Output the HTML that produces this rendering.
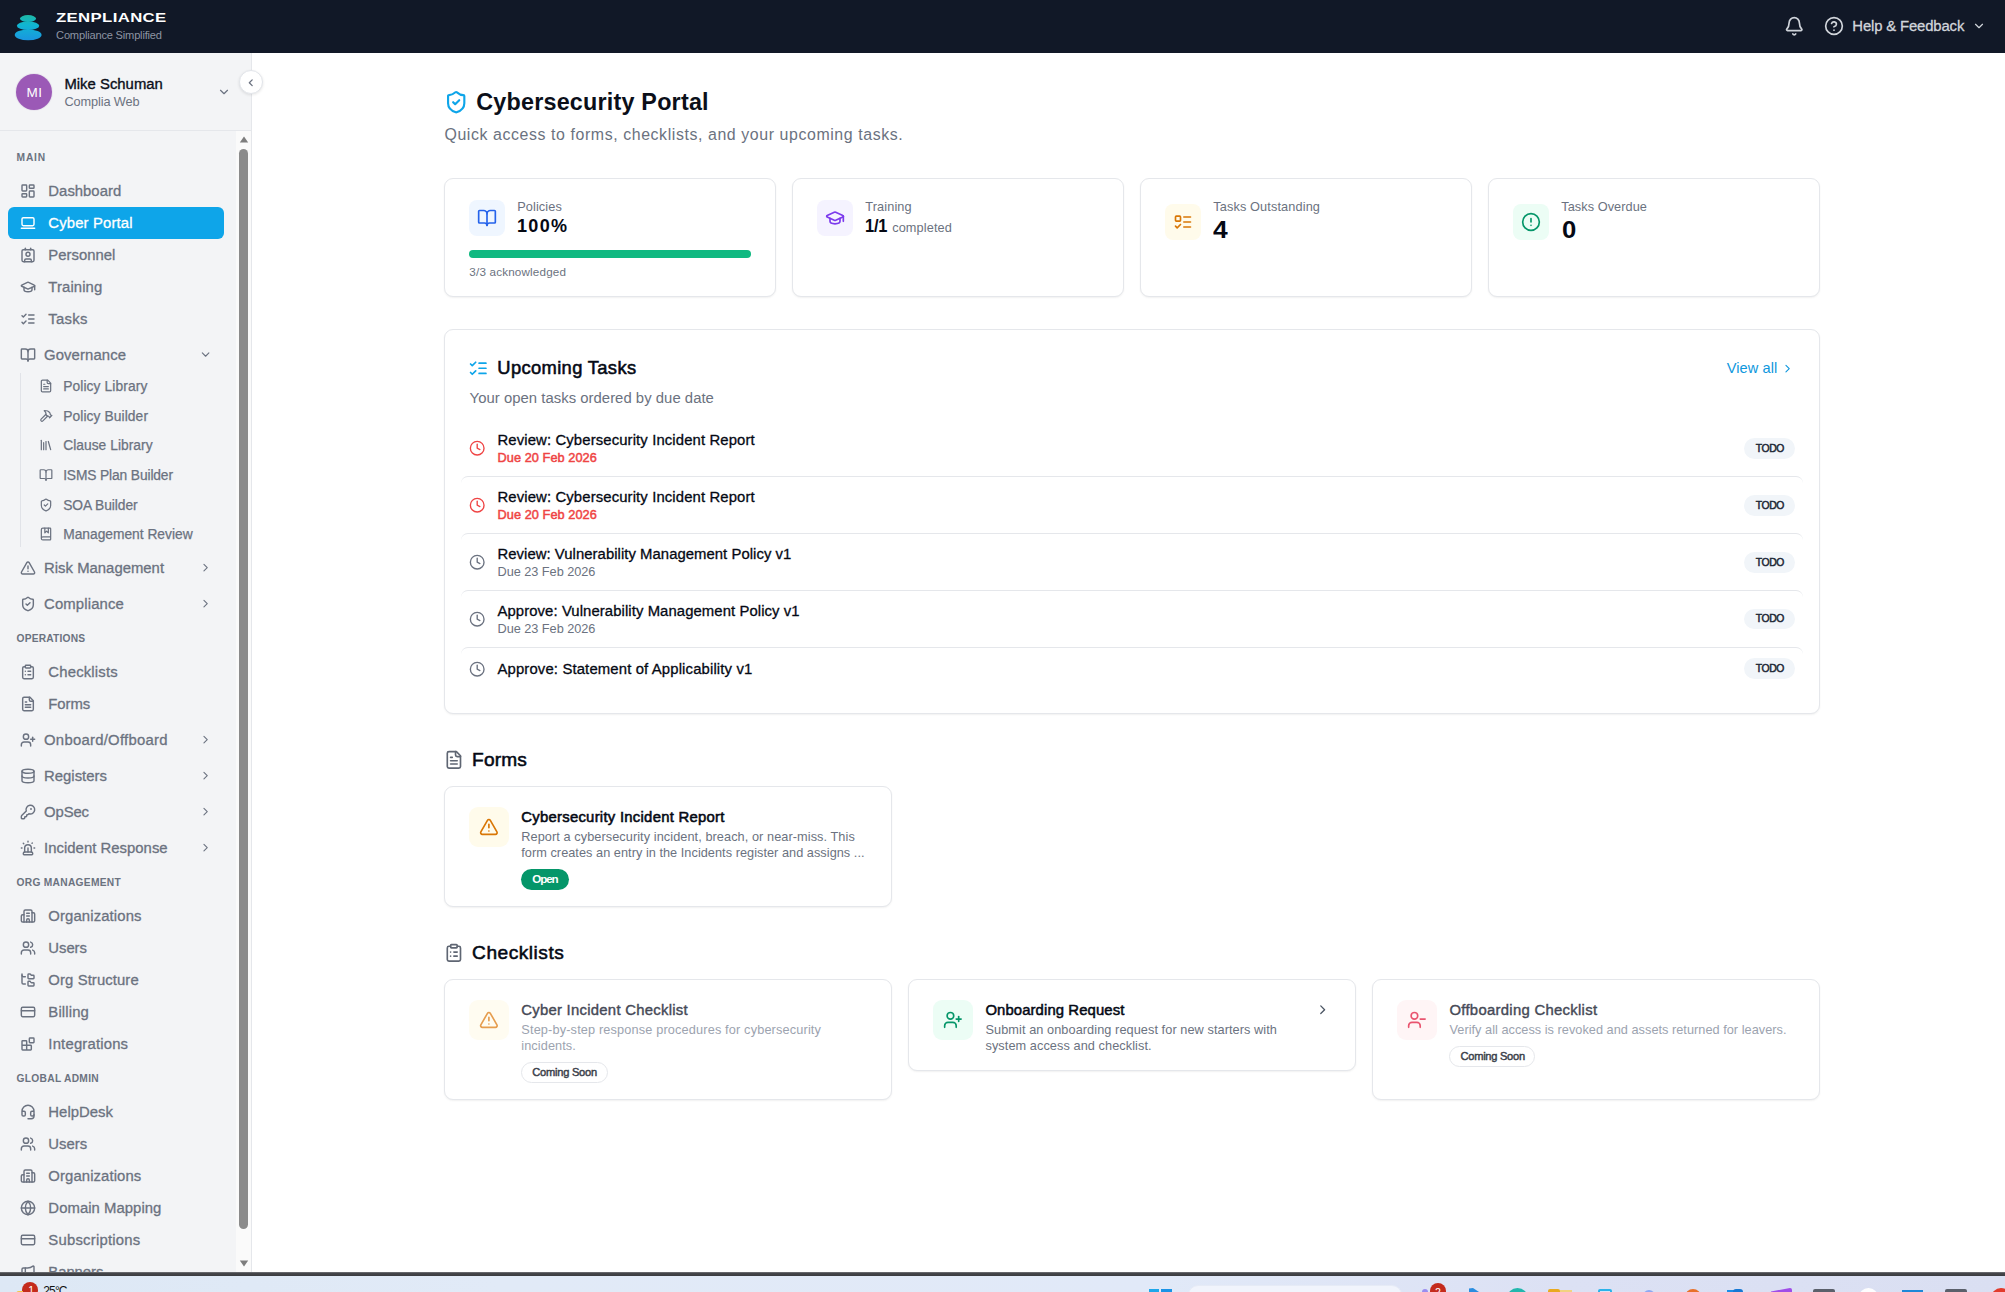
<!DOCTYPE html>
<html><head><meta charset="utf-8"><title>Cybersecurity Portal</title>
<style>
html,body{margin:0;padding:0}
body{width:2005px;height:1292px;overflow:hidden;position:relative;background:#fff;font-family:"Liberation Sans",sans-serif;-webkit-font-smoothing:antialiased}
#r>div,#r>span,#r>svg{position:absolute;display:block;box-sizing:border-box}
#r>span{white-space:pre}
#r{position:absolute;left:0;top:0;width:2005px;height:1292px;overflow:hidden}

</style></head><body>
<svg width="0" height="0" style="position:absolute"><defs><g id="i-alertcircle"><circle cx="12" cy="12" r="10"/><line x1="12" x2="12" y1="8" y2="12"/><line x1="12" x2="12.01" y1="16" y2="16"/></g><g id="i-bell"><path d="M10.268 21a2 2 0 0 0 3.464 0"/><path d="M3.262 15.326A1 1 0 0 0 4 17h16a1 1 0 0 0 .74-1.673C19.41 13.956 18 12.499 18 8A6 6 0 0 0 6 8c0 4.499-1.411 5.956-2.738 7.326"/></g><g id="i-blocks"><rect width="7" height="7" x="14" y="3" rx="1"/><path d="M10 21V8a1 1 0 0 0-1-1H4a1 1 0 0 0-1 1v12a1 1 0 0 0 1 1h12a1 1 0 0 0 1-1v-5a1 1 0 0 0-1-1H3"/></g><g id="i-bookmarked"><path d="M10 2v8l3-3 3 3V2"/><path d="M4 19.5v-15A2.5 2.5 0 0 1 6.5 2H19a1 1 0 0 1 1 1v18a1 1 0 0 1-1 1H6.5a1 1 0 0 1 0-5H20"/></g><g id="i-bookopen"><path d="M12 7v14"/><path d="M3 18a1 1 0 0 1-1-1V4a1 1 0 0 1 1-1h5a4 4 0 0 1 4 4 4 4 0 0 1 4-4h5a1 1 0 0 1 1 1v13a1 1 0 0 1-1 1h-6a3 3 0 0 0-3 3 3 3 0 0 0-3-3z"/></g><g id="i-building"><path d="M10 12h4"/><path d="M10 8h4"/><path d="M14 21v-3a2 2 0 0 0-4 0v3"/><path d="M6 10H4a2 2 0 0 0-2 2v7a2 2 0 0 0 2 2h16a2 2 0 0 0 2-2V9a2 2 0 0 0-2-2h-2"/><path d="M6 21V5a2 2 0 0 1 2-2h8a2 2 0 0 1 2 2v16"/></g><g id="i-card"><rect width="20" height="14" x="2" y="5" rx="2"/><line x1="2" x2="22" y1="10" y2="10"/></g><g id="i-chevdown"><path d="m6 9 6 6 6-6"/></g><g id="i-chevleft"><path d="m15 18-6-6 6-6"/></g><g id="i-chevright"><path d="m9 18 6-6-6-6"/></g><g id="i-clipboard"><rect width="8" height="4" x="8" y="2" rx="1" ry="1"/><path d="M16 4h2a2 2 0 0 1 2 2v14a2 2 0 0 1-2 2H6a2 2 0 0 1-2-2V6a2 2 0 0 1 2-2h2"/><path d="M12 11h4"/><path d="M12 16h4"/><path d="M8 11h.01"/><path d="M8 16h.01"/></g><g id="i-clock"><circle cx="12" cy="12" r="10"/><polyline points="12 6 12 12 16 14"/></g><g id="i-contact"><path d="M16 2v2"/><path d="M7 22v-2a2 2 0 0 1 2-2h6a2 2 0 0 1 2 2v2"/><path d="M8 2v2"/><circle cx="12" cy="11" r="3"/><rect x="3" y="4" width="18" height="18" rx="2"/></g><g id="i-dashboard"><rect width="7" height="9" x="3" y="3" rx="1"/><rect width="7" height="5" x="14" y="3" rx="1"/><rect width="7" height="9" x="14" y="12" rx="1"/><rect width="7" height="5" x="3" y="16" rx="1"/></g><g id="i-database"><ellipse cx="12" cy="5" rx="9" ry="3"/><path d="M3 5V19A9 3 0 0 0 21 19V5"/><path d="M3 12A9 3 0 0 0 21 12"/></g><g id="i-filetext"><path d="M15 2H6a2 2 0 0 0-2 2v16a2 2 0 0 0 2 2h12a2 2 0 0 0 2-2V7Z"/><path d="M14 2v4a2 2 0 0 0 2 2h4"/><path d="M10 9H8"/><path d="M16 13H8"/><path d="M16 17H8"/></g><g id="i-foldertree"><path d="M20 10a1 1 0 0 0 1-1V6a1 1 0 0 0-1-1h-2.5a1 1 0 0 1-.8-.4l-.9-1.2A1 1 0 0 0 15 3h-2a1 1 0 0 0-1 1v5a1 1 0 0 0 1 1Z"/><path d="M20 21a1 1 0 0 0 1-1v-3a1 1 0 0 0-1-1h-2.9a1 1 0 0 1-.88-.55l-.42-.85a1 1 0 0 0-.92-.6H13a1 1 0 0 0-1 1v5a1 1 0 0 0 1 1Z"/><path d="M3 5a2 2 0 0 0 2 2h3"/><path d="M3 3v13a2 2 0 0 0 2 2h3"/></g><g id="i-globe"><circle cx="12" cy="12" r="10"/><path d="M12 2a14.5 14.5 0 0 0 0 20 14.5 14.5 0 0 0 0-20"/><path d="M2 12h20"/></g><g id="i-gradcap"><path d="M21.42 10.922a1 1 0 0 0-.019-1.838L12.83 5.18a2 2 0 0 0-1.66 0L2.6 9.08a1 1 0 0 0 0 1.832l8.57 3.908a2 2 0 0 0 1.66 0z"/><path d="M22 10v6"/><path d="M6 12.5V16a6 3 0 0 0 12 0v-3.5"/></g><g id="i-hammer"><path d="m15 12-8.373 8.373a1 1 0 1 1-3-3L12 9"/><path d="m18 15 4-4"/><path d="m21.5 11.5-1.914-1.914A2 2 0 0 1 19 8.172V7l-2.26-2.26a6 6 0 0 0-4.202-1.756L9 2.96l.92.82A6.18 6.18 0 0 1 12 8.4V10l2 2h1.172a2 2 0 0 1 1.414.586L18.5 14.5"/></g><g id="i-headset"><path d="M3 11h3a2 2 0 0 1 2 2v3a2 2 0 0 1-2 2H5a2 2 0 0 1-2-2v-5Zm0 0a9 9 0 1 1 18 0m0 0v5a2 2 0 0 1-2 2h-1a2 2 0 0 1-2-2v-3a2 2 0 0 1 2-2h3Z"/><path d="M21 16v2a4 4 0 0 1-4 4h-5"/></g><g id="i-help"><circle cx="12" cy="12" r="10"/><path d="M9.09 9a3 3 0 0 1 5.83 1c0 2-3 3-3 3"/><path d="M12 17h.01"/></g><g id="i-key"><path d="M2.586 17.414A2 2 0 0 0 2 18.828V21a1 1 0 0 0 1 1h3a1 1 0 0 0 1-1v-1a1 1 0 0 1 1-1h1a1 1 0 0 0 1-1v-1a1 1 0 0 1 1-1h.172a2 2 0 0 0 1.414-.586l.814-.814a6.5 6.5 0 1 0-4-4z"/><circle cx="16.5" cy="7.5" r=".5" fill="currentColor"/></g><g id="i-laptop"><rect width="18" height="12" x="3" y="4" rx="2" ry="2"/><line x1="2" x2="22" y1="20" y2="20"/></g><g id="i-library"><path d="m16 6 4 14"/><path d="M12 6v14"/><path d="M8 8v12"/><path d="M4 4v16"/></g><g id="i-listchecks"><path d="m3 17 2 2 4-4"/><path d="m3 7 2 2 4-4"/><path d="M13 6h8"/><path d="M13 12h8"/><path d="M13 18h8"/></g><g id="i-listtodo"><rect x="3" y="5" width="6" height="6" rx="1"/><path d="m3 17 2 2 4-4"/><path d="M13 6h8"/><path d="M13 12h8"/><path d="M13 18h8"/></g><g id="i-megaphone"><path d="M11 6a13 13 0 0 0 8.4-2.8A1 1 0 0 1 21 4v12a1 1 0 0 1-1.6.8A13 13 0 0 0 11 14H5a2 2 0 0 1-2-2V8a2 2 0 0 1 2-2z"/><path d="M6 14a12 12 0 0 0 2.4 7.2 2 2 0 0 0 3.2-2.4A8 8 0 0 1 10 14"/><path d="M8 6v8"/></g><g id="i-shieldcheck"><path d="M20 13c0 5-3.5 7.5-7.66 8.95a1 1 0 0 1-.67-.01C7.5 20.5 4 18 4 13V6a1 1 0 0 1 1-1c2 0 4.5-1.2 6.24-2.72a1.17 1.17 0 0 1 1.52 0C14.51 3.81 17 5 19 5a1 1 0 0 1 1 1z"/><path d="m9 12 2 2 4-4"/></g><g id="i-siren"><path d="M7 18v-6a5 5 0 1 1 10 0v6"/><path d="M5 21a1 1 0 0 0 1 1h12a1 1 0 0 0 1-1v-1a2 2 0 0 0-2-2H7a2 2 0 0 0-2 2z"/><path d="M21 12h1"/><path d="M18.5 4.5 18 5"/><path d="M2 12h1"/><path d="M12 2v1"/><path d="m4.929 4.929.707.707"/><path d="M12 12v6"/></g><g id="i-triangle"><path d="m21.73 18-8-14a2 2 0 0 0-3.48 0l-8 14A2 2 0 0 0 4 21h16a2 2 0 0 0 1.73-3"/><path d="M12 9v4"/><path d="M12 17h.01"/></g><g id="i-userminus"><path d="M16 21v-2a4 4 0 0 0-4-4H6a4 4 0 0 0-4 4v2"/><circle cx="9" cy="7" r="4"/><line x1="22" x2="16" y1="11" y2="11"/></g><g id="i-userplus"><path d="M16 21v-2a4 4 0 0 0-4-4H6a4 4 0 0 0-4 4v2"/><circle cx="9" cy="7" r="4"/><line x1="19" x2="19" y1="8" y2="14"/><line x1="22" x2="16" y1="11" y2="11"/></g><g id="i-users"><path d="M16 21v-2a4 4 0 0 0-4-4H6a4 4 0 0 0-4 4v2"/><circle cx="9" cy="7" r="4"/><path d="M22 21v-2a4 4 0 0 0-3-3.87"/><path d="M16 3.13a4 4 0 0 1 0 7.75"/></g></defs></svg>
<div id="r">
<div style="left:0px;top:0px;width:2005px;height:52.5px;background:#111827"></div>
<svg style="left:14px;top:14px" width="28" height="27" viewBox="0 0 28 27"><defs><linearGradient id="lg" gradientUnits="userSpaceOnUse" x1="0" y1="1" x2="0" y2="26"><stop offset="0" stop-color="#1eb7a4"/><stop offset="0.4" stop-color="#10b6d2"/><stop offset="1" stop-color="#1a96e0"/></linearGradient></defs><g fill="url(#lg)"><ellipse cx="14" cy="4.6" rx="8.1" ry="3.5"/><ellipse cx="14.05" cy="11.7" rx="11.2" ry="4.3"/><ellipse cx="14.15" cy="20.9" rx="13.4" ry="5.4"/></g></svg>
<span style="left:56.00px;top:8.60px;font-size:13px;font-weight:700;color:#fff;line-height:18px;transform:scaleX(1.285);transform-origin:0 50%;letter-spacing:0.3px;">ZENPLIANCE</span>
<span style="left:56.09px;top:27.10px;font-size:11.1px;font-weight:400;color:#8d94a3;line-height:16px;letter-spacing:-0.193px;">Compliance Simplified</span>
<svg style="left:1783.55px;top:15.75px;color:#cfd3da;" width="20.5" height="20.5" viewBox="0 0 24 24" fill="none" stroke="currentColor" stroke-width="2" stroke-linecap="round" stroke-linejoin="round"><use href="#i-bell"/></svg>
<svg style="left:1824px;top:16px;color:#d1d5db;" width="20" height="20" viewBox="0 0 24 24" fill="none" stroke="currentColor" stroke-width="2" stroke-linecap="round" stroke-linejoin="round"><use href="#i-help"/></svg>
<span style="left:1852.31px;top:15.50px;font-size:14.86px;font-weight:400;color:#d1d5db;line-height:21px;letter-spacing:-0.140px;-webkit-text-stroke:0.3px #d1d5db;">Help &amp; Feedback</span>
<svg style="left:1972.2px;top:19px;color:#d1d5db;" width="14" height="14" viewBox="0 0 24 24" fill="none" stroke="currentColor" stroke-width="2" stroke-linecap="round" stroke-linejoin="round"><use href="#i-chevdown"/></svg>
<div style="left:0px;top:52.5px;width:252px;height:1220px;background:#f3f4f6;border-right:1px solid #e5e7eb"></div>
<div style="left:0px;top:130px;width:251px;height:1px;background:#e5e7eb"></div>
<div style="left:15px;top:73px;width:38px;height:38px;border-radius:50%;background:#e9e6ee"></div>
<div style="left:16px;top:74px;width:36px;height:36px;border-radius:50%;background:#9b59b6"></div>
<span style="left:26.57px;top:82.80px;font-size:13.51px;font-weight:400;color:#fff;line-height:19px;letter-spacing:0.416px;">MI</span>
<span style="left:64.41px;top:73.70px;font-size:14.86px;font-weight:400;color:#0b0f19;line-height:21px;letter-spacing:0.014px;-webkit-text-stroke:0.35px #0b0f19;">Mike Schuman</span>
<span style="left:64.51px;top:93.00px;font-size:12.74px;font-weight:400;color:#6b7280;line-height:18px;letter-spacing:-0.116px;">Complia Web</span>
<svg style="left:217px;top:85px;color:#6b7280;" width="14" height="14" viewBox="0 0 24 24" fill="none" stroke="currentColor" stroke-width="2" stroke-linecap="round" stroke-linejoin="round"><use href="#i-chevdown"/></svg>
<div style="left:236px;top:131px;width:15px;height:1141px;background:#fafafa"></div>
<div style="left:239px;top:148.5px;width:9px;height:1080px;background:#8b8b8b;border-radius:4.5px"></div>
<svg style="left:238.6px;top:136.3px" width="10" height="7" viewBox="0 0 10 7"><path d="M5 0.5 L9.2 6.5 L0.8 6.5 Z" fill="#7d7d7d"/></svg>
<svg style="left:238.6px;top:1259.5px" width="10" height="7" viewBox="0 0 10 7"><path d="M5 6.5 L9.2 0.5 L0.8 0.5 Z" fill="#7d7d7d"/></svg>
<span style="left:16.54px;top:150.80px;font-size:10.23px;font-weight:700;color:#6b7280;line-height:14px;letter-spacing:0.832px;">MAIN</span>
<svg style="left:20.2px;top:183px;color:#6b7280;" width="16" height="16" viewBox="0 0 24 24" fill="none" stroke="currentColor" stroke-width="2.15" stroke-linecap="round" stroke-linejoin="round"><use href="#i-dashboard"/></svg>
<span style="left:48.36px;top:180.70px;font-size:14.86px;font-weight:400;color:#6b7280;line-height:21px;letter-spacing:0.011px;-webkit-text-stroke:0.3px #6b7280;">Dashboard</span>
<div style="left:8.2px;top:207.2px;width:215.8px;height:31.8px;background:#0ea5e9;border-radius:6px"></div>
<svg style="left:20.2px;top:215px;color:#fff;" width="16" height="16" viewBox="0 0 24 24" fill="none" stroke="currentColor" stroke-width="2.15" stroke-linecap="round" stroke-linejoin="round"><use href="#i-laptop"/></svg>
<span style="left:48.36px;top:212.70px;font-size:14.86px;font-weight:400;color:#fff;line-height:21px;letter-spacing:0.136px;-webkit-text-stroke:0.3px #fff;">Cyber Portal</span>
<svg style="left:20.2px;top:247px;color:#6b7280;" width="16" height="16" viewBox="0 0 24 24" fill="none" stroke="currentColor" stroke-width="2.15" stroke-linecap="round" stroke-linejoin="round"><use href="#i-contact"/></svg>
<span style="left:48.36px;top:244.70px;font-size:14.86px;font-weight:400;color:#6b7280;line-height:21px;letter-spacing:0.008px;-webkit-text-stroke:0.3px #6b7280;">Personnel</span>
<svg style="left:20.2px;top:279px;color:#6b7280;" width="16" height="16" viewBox="0 0 24 24" fill="none" stroke="currentColor" stroke-width="2.15" stroke-linecap="round" stroke-linejoin="round"><use href="#i-gradcap"/></svg>
<span style="left:48.36px;top:276.70px;font-size:14.86px;font-weight:400;color:#6b7280;line-height:21px;letter-spacing:0.107px;-webkit-text-stroke:0.3px #6b7280;">Training</span>
<svg style="left:20.2px;top:311px;color:#6b7280;" width="16" height="16" viewBox="0 0 24 24" fill="none" stroke="currentColor" stroke-width="2.15" stroke-linecap="round" stroke-linejoin="round"><use href="#i-listchecks"/></svg>
<span style="left:48.36px;top:308.70px;font-size:14.86px;font-weight:400;color:#6b7280;line-height:21px;letter-spacing:0.276px;-webkit-text-stroke:0.3px #6b7280;">Tasks</span>
<svg style="left:19.8px;top:347px;color:#6b7280;" width="16" height="16" viewBox="0 0 24 24" fill="none" stroke="currentColor" stroke-width="2.15" stroke-linecap="round" stroke-linejoin="round"><use href="#i-bookopen"/></svg>
<span style="left:44.06px;top:344.70px;font-size:14.86px;font-weight:400;color:#6b7280;line-height:21px;letter-spacing:0.104px;-webkit-text-stroke:0.3px #6b7280;">Governance</span>
<svg style="left:199.2px;top:348.4px;color:#6b7280;" width="13.2" height="13.2" viewBox="0 0 24 24" fill="none" stroke="currentColor" stroke-width="2" stroke-linecap="round" stroke-linejoin="round"><use href="#i-chevdown"/></svg>
<div style="left:20px;top:373px;width:1px;height:174px;background:#e1e3e8"></div>
<svg style="left:39px;top:379.3px;color:#6b7280;" width="14" height="14" viewBox="0 0 24 24" fill="none" stroke="currentColor" stroke-width="2.1" stroke-linecap="round" stroke-linejoin="round"><use href="#i-filetext"/></svg>
<span style="left:63.16px;top:377.30px;font-size:13.8px;font-weight:400;color:#6b7280;line-height:19px;letter-spacing:0.110px;-webkit-text-stroke:0.25px #6b7280;">Policy Library</span>
<svg style="left:39px;top:409px;color:#6b7280;" width="14" height="14" viewBox="0 0 24 24" fill="none" stroke="currentColor" stroke-width="2.1" stroke-linecap="round" stroke-linejoin="round"><use href="#i-hammer"/></svg>
<span style="left:63.16px;top:407.00px;font-size:13.8px;font-weight:400;color:#6b7280;line-height:19px;letter-spacing:0.096px;-webkit-text-stroke:0.25px #6b7280;">Policy Builder</span>
<svg style="left:39px;top:438.4px;color:#6b7280;" width="14" height="14" viewBox="0 0 24 24" fill="none" stroke="currentColor" stroke-width="2.1" stroke-linecap="round" stroke-linejoin="round"><use href="#i-library"/></svg>
<span style="left:63.16px;top:436.40px;font-size:13.8px;font-weight:400;color:#6b7280;line-height:19px;letter-spacing:0.038px;-webkit-text-stroke:0.25px #6b7280;">Clause Library</span>
<svg style="left:39px;top:468px;color:#6b7280;" width="14" height="14" viewBox="0 0 24 24" fill="none" stroke="currentColor" stroke-width="2.1" stroke-linecap="round" stroke-linejoin="round"><use href="#i-bookopen"/></svg>
<span style="left:63.16px;top:466.00px;font-size:13.8px;font-weight:400;color:#6b7280;line-height:19px;letter-spacing:-0.133px;-webkit-text-stroke:0.25px #6b7280;">ISMS Plan Builder</span>
<svg style="left:39px;top:497.5px;color:#6b7280;" width="14" height="14" viewBox="0 0 24 24" fill="none" stroke="currentColor" stroke-width="2.1" stroke-linecap="round" stroke-linejoin="round"><use href="#i-shieldcheck"/></svg>
<span style="left:63.16px;top:495.50px;font-size:13.8px;font-weight:400;color:#6b7280;line-height:19px;letter-spacing:-0.071px;-webkit-text-stroke:0.25px #6b7280;">SOA Builder</span>
<svg style="left:39px;top:527px;color:#6b7280;" width="14" height="14" viewBox="0 0 24 24" fill="none" stroke="currentColor" stroke-width="2.1" stroke-linecap="round" stroke-linejoin="round"><use href="#i-bookmarked"/></svg>
<span style="left:63.16px;top:525.00px;font-size:13.8px;font-weight:400;color:#6b7280;line-height:19px;letter-spacing:-0.010px;-webkit-text-stroke:0.25px #6b7280;">Management Review</span>
<svg style="left:19.8px;top:560px;color:#6b7280;" width="16" height="16" viewBox="0 0 24 24" fill="none" stroke="currentColor" stroke-width="2.15" stroke-linecap="round" stroke-linejoin="round"><use href="#i-triangle"/></svg>
<span style="left:44.06px;top:557.70px;font-size:14.86px;font-weight:400;color:#6b7280;line-height:21px;letter-spacing:0.016px;-webkit-text-stroke:0.3px #6b7280;">Risk Management</span>
<svg style="left:199.2px;top:561.4px;color:#6b7280;" width="13.2" height="13.2" viewBox="0 0 24 24" fill="none" stroke="currentColor" stroke-width="2" stroke-linecap="round" stroke-linejoin="round"><use href="#i-chevright"/></svg>
<svg style="left:19.8px;top:596px;color:#6b7280;" width="16" height="16" viewBox="0 0 24 24" fill="none" stroke="currentColor" stroke-width="2.15" stroke-linecap="round" stroke-linejoin="round"><use href="#i-shieldcheck"/></svg>
<span style="left:44.06px;top:593.70px;font-size:14.86px;font-weight:400;color:#6b7280;line-height:21px;letter-spacing:0.147px;-webkit-text-stroke:0.3px #6b7280;">Compliance</span>
<svg style="left:199.2px;top:597.4px;color:#6b7280;" width="13.2" height="13.2" viewBox="0 0 24 24" fill="none" stroke="currentColor" stroke-width="2" stroke-linecap="round" stroke-linejoin="round"><use href="#i-chevright"/></svg>
<span style="left:16.54px;top:631.60px;font-size:10.23px;font-weight:700;color:#6b7280;line-height:14px;letter-spacing:0.201px;">OPERATIONS</span>
<svg style="left:20.2px;top:664px;color:#6b7280;" width="16" height="16" viewBox="0 0 24 24" fill="none" stroke="currentColor" stroke-width="2.15" stroke-linecap="round" stroke-linejoin="round"><use href="#i-clipboard"/></svg>
<span style="left:48.36px;top:661.70px;font-size:14.86px;font-weight:400;color:#6b7280;line-height:21px;letter-spacing:0.174px;-webkit-text-stroke:0.3px #6b7280;">Checklists</span>
<svg style="left:20.2px;top:696px;color:#6b7280;" width="16" height="16" viewBox="0 0 24 24" fill="none" stroke="currentColor" stroke-width="2.15" stroke-linecap="round" stroke-linejoin="round"><use href="#i-filetext"/></svg>
<span style="left:48.36px;top:693.70px;font-size:14.86px;font-weight:400;color:#6b7280;line-height:21px;letter-spacing:-0.080px;-webkit-text-stroke:0.3px #6b7280;">Forms</span>
<svg style="left:19.8px;top:732px;color:#6b7280;" width="16" height="16" viewBox="0 0 24 24" fill="none" stroke="currentColor" stroke-width="2.15" stroke-linecap="round" stroke-linejoin="round"><use href="#i-userplus"/></svg>
<span style="left:44.06px;top:729.70px;font-size:14.86px;font-weight:400;color:#6b7280;line-height:21px;letter-spacing:0.258px;-webkit-text-stroke:0.3px #6b7280;">Onboard/Offboard</span>
<svg style="left:199.2px;top:733.4px;color:#6b7280;" width="13.2" height="13.2" viewBox="0 0 24 24" fill="none" stroke="currentColor" stroke-width="2" stroke-linecap="round" stroke-linejoin="round"><use href="#i-chevright"/></svg>
<svg style="left:19.8px;top:768px;color:#6b7280;" width="16" height="16" viewBox="0 0 24 24" fill="none" stroke="currentColor" stroke-width="2.15" stroke-linecap="round" stroke-linejoin="round"><use href="#i-database"/></svg>
<span style="left:44.06px;top:765.70px;font-size:14.86px;font-weight:400;color:#6b7280;line-height:21px;letter-spacing:0.015px;-webkit-text-stroke:0.3px #6b7280;">Registers</span>
<svg style="left:199.2px;top:769.4px;color:#6b7280;" width="13.2" height="13.2" viewBox="0 0 24 24" fill="none" stroke="currentColor" stroke-width="2" stroke-linecap="round" stroke-linejoin="round"><use href="#i-chevright"/></svg>
<svg style="left:19.8px;top:804px;color:#6b7280;" width="16" height="16" viewBox="0 0 24 24" fill="none" stroke="currentColor" stroke-width="2.15" stroke-linecap="round" stroke-linejoin="round"><use href="#i-key"/></svg>
<span style="left:44.06px;top:801.70px;font-size:14.86px;font-weight:400;color:#6b7280;line-height:21px;letter-spacing:-0.113px;-webkit-text-stroke:0.3px #6b7280;">OpSec</span>
<svg style="left:199.2px;top:805.4px;color:#6b7280;" width="13.2" height="13.2" viewBox="0 0 24 24" fill="none" stroke="currentColor" stroke-width="2" stroke-linecap="round" stroke-linejoin="round"><use href="#i-chevright"/></svg>
<svg style="left:19.8px;top:840px;color:#6b7280;" width="16" height="16" viewBox="0 0 24 24" fill="none" stroke="currentColor" stroke-width="2.15" stroke-linecap="round" stroke-linejoin="round"><use href="#i-siren"/></svg>
<span style="left:44.06px;top:837.70px;font-size:14.86px;font-weight:400;color:#6b7280;line-height:21px;letter-spacing:0.031px;-webkit-text-stroke:0.3px #6b7280;">Incident Response</span>
<svg style="left:199.2px;top:841.4px;color:#6b7280;" width="13.2" height="13.2" viewBox="0 0 24 24" fill="none" stroke="currentColor" stroke-width="2" stroke-linecap="round" stroke-linejoin="round"><use href="#i-chevright"/></svg>
<span style="left:16.54px;top:875.60px;font-size:10.23px;font-weight:700;color:#6b7280;line-height:14px;letter-spacing:0.287px;">ORG MANAGEMENT</span>
<svg style="left:20.2px;top:908px;color:#6b7280;" width="16" height="16" viewBox="0 0 24 24" fill="none" stroke="currentColor" stroke-width="2.15" stroke-linecap="round" stroke-linejoin="round"><use href="#i-building"/></svg>
<span style="left:48.36px;top:905.70px;font-size:14.86px;font-weight:400;color:#6b7280;line-height:21px;letter-spacing:0.117px;-webkit-text-stroke:0.3px #6b7280;">Organizations</span>
<svg style="left:20.2px;top:940px;color:#6b7280;" width="16" height="16" viewBox="0 0 24 24" fill="none" stroke="currentColor" stroke-width="2.15" stroke-linecap="round" stroke-linejoin="round"><use href="#i-users"/></svg>
<span style="left:48.36px;top:937.70px;font-size:14.86px;font-weight:400;color:#6b7280;line-height:21px;letter-spacing:-0.056px;-webkit-text-stroke:0.3px #6b7280;">Users</span>
<svg style="left:20.2px;top:972px;color:#6b7280;" width="16" height="16" viewBox="0 0 24 24" fill="none" stroke="currentColor" stroke-width="2.15" stroke-linecap="round" stroke-linejoin="round"><use href="#i-foldertree"/></svg>
<span style="left:48.36px;top:969.70px;font-size:14.86px;font-weight:400;color:#6b7280;line-height:21px;letter-spacing:0.092px;-webkit-text-stroke:0.3px #6b7280;">Org Structure</span>
<svg style="left:20.2px;top:1004px;color:#6b7280;" width="16" height="16" viewBox="0 0 24 24" fill="none" stroke="currentColor" stroke-width="2.15" stroke-linecap="round" stroke-linejoin="round"><use href="#i-card"/></svg>
<span style="left:48.36px;top:1001.70px;font-size:14.86px;font-weight:400;color:#6b7280;line-height:21px;letter-spacing:0.139px;-webkit-text-stroke:0.3px #6b7280;">Billing</span>
<svg style="left:20.2px;top:1036px;color:#6b7280;" width="16" height="16" viewBox="0 0 24 24" fill="none" stroke="currentColor" stroke-width="2.15" stroke-linecap="round" stroke-linejoin="round"><use href="#i-blocks"/></svg>
<span style="left:48.36px;top:1033.70px;font-size:14.86px;font-weight:400;color:#6b7280;line-height:21px;letter-spacing:0.185px;-webkit-text-stroke:0.3px #6b7280;">Integrations</span>
<span style="left:16.54px;top:1071.60px;font-size:10.23px;font-weight:700;color:#6b7280;line-height:14px;letter-spacing:0.292px;">GLOBAL ADMIN</span>
<svg style="left:20.2px;top:1104px;color:#6b7280;" width="16" height="16" viewBox="0 0 24 24" fill="none" stroke="currentColor" stroke-width="2.15" stroke-linecap="round" stroke-linejoin="round"><use href="#i-headset"/></svg>
<span style="left:48.36px;top:1101.70px;font-size:14.86px;font-weight:400;color:#6b7280;line-height:21px;letter-spacing:0.024px;-webkit-text-stroke:0.3px #6b7280;">HelpDesk</span>
<svg style="left:20.2px;top:1136px;color:#6b7280;" width="16" height="16" viewBox="0 0 24 24" fill="none" stroke="currentColor" stroke-width="2.15" stroke-linecap="round" stroke-linejoin="round"><use href="#i-users"/></svg>
<span style="left:48.36px;top:1133.70px;font-size:14.86px;font-weight:400;color:#6b7280;line-height:21px;letter-spacing:0.019px;-webkit-text-stroke:0.3px #6b7280;">Users</span>
<svg style="left:20.2px;top:1168px;color:#6b7280;" width="16" height="16" viewBox="0 0 24 24" fill="none" stroke="currentColor" stroke-width="2.15" stroke-linecap="round" stroke-linejoin="round"><use href="#i-building"/></svg>
<span style="left:48.36px;top:1165.70px;font-size:14.86px;font-weight:400;color:#6b7280;line-height:21px;letter-spacing:0.100px;-webkit-text-stroke:0.3px #6b7280;">Organizations</span>
<svg style="left:20.2px;top:1200px;color:#6b7280;" width="16" height="16" viewBox="0 0 24 24" fill="none" stroke="currentColor" stroke-width="2.15" stroke-linecap="round" stroke-linejoin="round"><use href="#i-globe"/></svg>
<span style="left:48.36px;top:1197.70px;font-size:14.86px;font-weight:400;color:#6b7280;line-height:21px;letter-spacing:0.050px;-webkit-text-stroke:0.3px #6b7280;">Domain Mapping</span>
<svg style="left:20.2px;top:1232px;color:#6b7280;" width="16" height="16" viewBox="0 0 24 24" fill="none" stroke="currentColor" stroke-width="2.15" stroke-linecap="round" stroke-linejoin="round"><use href="#i-card"/></svg>
<span style="left:48.36px;top:1229.70px;font-size:14.86px;font-weight:400;color:#6b7280;line-height:21px;letter-spacing:0.215px;-webkit-text-stroke:0.3px #6b7280;">Subscriptions</span>
<svg style="left:20.2px;top:1264px;color:#6b7280;" width="16" height="16" viewBox="0 0 24 24" fill="none" stroke="currentColor" stroke-width="2.15" stroke-linecap="round" stroke-linejoin="round"><use href="#i-megaphone"/></svg>
<span style="left:48.36px;top:1261.70px;font-size:14.86px;font-weight:400;color:#6b7280;line-height:21px;letter-spacing:-0.062px;-webkit-text-stroke:0.3px #6b7280;">Banners</span>
<div style="left:239px;top:70px;width:24px;height:24px;border-radius:50%;background:#fff;border:1px solid #e2e5ea;box-shadow:0 1px 3px rgba(0,0,0,.10)"></div>
<svg style="left:245.05px;top:76.75px;color:#6b7280;" width="11.5" height="11.5" viewBox="0 0 24 24" fill="none" stroke="currentColor" stroke-width="2.7" stroke-linecap="round" stroke-linejoin="round"><use href="#i-chevleft"/></svg>
<svg style="left:443.5px;top:89.7px;color:#0ea5e9;" width="24.4" height="24.4" viewBox="0 0 24 24" fill="none" stroke="currentColor" stroke-width="2.1" stroke-linecap="round" stroke-linejoin="round"><use href="#i-shieldcheck"/></svg>
<span style="left:476.28px;top:85.70px;font-size:23.35px;font-weight:700;color:#0b0f19;line-height:33px;letter-spacing:0.208px;">Cybersecurity Portal</span>
<span style="left:444.45px;top:124.00px;font-size:15.92px;font-weight:400;color:#6b7280;line-height:22px;letter-spacing:0.585px;">Quick access to forms, checklists, and your upcoming tasks.</span>
<div style="left:444.4px;top:178px;width:332px;height:119px;background:#fff;border:1px solid #e5e7eb;border-radius:9px;box-shadow:0 1px 2px rgba(0,0,0,.06)"></div>
<div style="left:469px;top:200px;width:36px;height:36px;border-radius:8px;background:#eff6ff"></div>
<svg style="left:477px;top:208px;color:#2563eb;" width="20" height="20" viewBox="0 0 24 24" fill="none" stroke="currentColor" stroke-width="2" stroke-linecap="round" stroke-linejoin="round"><use href="#i-bookopen"/></svg>
<span style="left:517.21px;top:197.50px;font-size:12.74px;font-weight:400;color:#6b7280;line-height:18px;letter-spacing:0.108px;">Policies</span>
<span style="left:517.05px;top:214.10px;font-size:18.05px;font-weight:700;color:#050914;line-height:25px;letter-spacing:1.267px;">100%</span>
<div style="left:469.1px;top:250.3px;width:281.8px;height:7.4px;background:#10b981;border-radius:4px"></div>
<span style="left:469.37px;top:263.80px;font-size:11.68px;font-weight:400;color:#6b7280;line-height:16px;letter-spacing:0.170px;">3/3 acknowledged</span>
<div style="left:792.4px;top:178px;width:332px;height:119px;background:#fff;border:1px solid #e5e7eb;border-radius:9px;box-shadow:0 1px 2px rgba(0,0,0,.06)"></div>
<div style="left:817px;top:200px;width:36px;height:36px;border-radius:8px;background:#f5f3ff"></div>
<svg style="left:825px;top:208px;color:#7c3aed;" width="20" height="20" viewBox="0 0 24 24" fill="none" stroke="currentColor" stroke-width="2" stroke-linecap="round" stroke-linejoin="round"><use href="#i-gradcap"/></svg>
<span style="left:865.21px;top:197.50px;font-size:12.74px;font-weight:400;color:#6b7280;line-height:18px;letter-spacing:0.129px;">Training</span>
<span style="left:865.29px;top:212.10px;font-size:19.11px;font-weight:700;color:#050914;line-height:27px;transform:scaleX(0.86);transform-origin:0 50%;letter-spacing:-0.3px;">1/1</span>
<span style="left:892.21px;top:219.00px;font-size:12.74px;font-weight:400;color:#6b7280;line-height:18px;letter-spacing:0.110px;">completed</span>
<div style="left:1140.4px;top:178px;width:332px;height:119px;background:#fff;border:1px solid #e5e7eb;border-radius:9px;box-shadow:0 1px 2px rgba(0,0,0,.06)"></div>
<div style="left:1165px;top:203.9px;width:36px;height:36px;border-radius:8px;background:#fffbeb"></div>
<svg style="left:1173px;top:211.9px;color:#d97706;" width="20" height="20" viewBox="0 0 24 24" fill="none" stroke="currentColor" stroke-width="2" stroke-linecap="round" stroke-linejoin="round"><use href="#i-listtodo"/></svg>
<span style="left:1213.21px;top:197.50px;font-size:12.74px;font-weight:400;color:#6b7280;line-height:18px;letter-spacing:0.124px;">Tasks Outstanding</span>
<span style="left:1213.38px;top:213.50px;font-size:23.35px;font-weight:700;color:#050914;line-height:33px;transform:scaleX(1.13);transform-origin:0 50%;">4</span>
<div style="left:1488.4px;top:178px;width:332px;height:119px;background:#fff;border:1px solid #e5e7eb;border-radius:9px;box-shadow:0 1px 2px rgba(0,0,0,.06)"></div>
<div style="left:1513px;top:203.9px;width:36px;height:36px;border-radius:8px;background:#ecfdf5"></div>
<svg style="left:1521px;top:211.9px;color:#059669;" width="20" height="20" viewBox="0 0 24 24" fill="none" stroke="currentColor" stroke-width="2" stroke-linecap="round" stroke-linejoin="round"><use href="#i-alertcircle"/></svg>
<span style="left:1561.21px;top:197.50px;font-size:12.74px;font-weight:400;color:#6b7280;line-height:18px;letter-spacing:0.067px;">Tasks Overdue</span>
<span style="left:1561.78px;top:213.50px;font-size:23.35px;font-weight:700;color:#050914;line-height:33px;transform:scaleX(1.1);transform-origin:0 50%;">0</span>
<div style="left:444.4px;top:329.4px;width:1375.4px;height:384.4px;background:#fff;border:1px solid #e5e7eb;border-radius:9px;box-shadow:0 1px 2px rgba(0,0,0,.06)"></div>
<svg style="left:468.35px;top:357.55px;color:#0ea5e9;" width="20.5" height="20.5" viewBox="0 0 24 24" fill="none" stroke="currentColor" stroke-width="2" stroke-linecap="round" stroke-linejoin="round"><use href="#i-listchecks"/></svg>
<span style="left:497.33px;top:354.60px;font-size:18.34px;font-weight:400;color:#050914;line-height:26px;letter-spacing:0.356px;-webkit-text-stroke:0.55px #050914;">Upcoming Tasks</span>
<span style="left:469.61px;top:387.90px;font-size:14.86px;font-weight:400;color:#6b7280;line-height:21px;letter-spacing:0.032px;">Your open tasks ordered by due date</span>
<span style="left:1726.72px;top:358.40px;font-size:14.57px;font-weight:400;color:#0e97dd;line-height:20px;letter-spacing:0.098px;">View all</span>
<svg style="left:1781.4px;top:361.6px;color:#0e97dd;" width="13.2" height="13.2" viewBox="0 0 24 24" fill="none" stroke="currentColor" stroke-width="2" stroke-linecap="round" stroke-linejoin="round"><use href="#i-chevright"/></svg>
<svg style="left:468.6px;top:440px;color:#ef4444;" width="16.4" height="16.4" viewBox="0 0 24 24" fill="none" stroke="currentColor" stroke-width="2" stroke-linecap="round" stroke-linejoin="round"><use href="#i-clock"/></svg>
<span style="left:497.51px;top:429.80px;font-size:14.86px;font-weight:400;color:#050914;line-height:21px;letter-spacing:0.123px;-webkit-text-stroke:0.3px #050914;">Review: Cybersecurity Incident Report</span>
<span style="left:497.61px;top:448.90px;font-size:12.74px;font-weight:400;color:#ef4444;line-height:18px;letter-spacing:0.052px;-webkit-text-stroke:0.5px #ef4444;">Due 20 Feb 2026</span>
<div style="left:1744px;top:438.2px;width:50.8px;height:20.6px;background:#f1f5f9;border-radius:11px"></div>
<span style="left:1755.63px;top:440.70px;font-size:10.42px;font-weight:400;color:#1f2937;line-height:15px;letter-spacing:-0.346px;-webkit-text-stroke:0.5px #1f2937;">TODO</span>
<div style="left:461.2px;top:476.3px;width:1342px;height:12px;border-top:1px solid #e5e7eb;border-radius:7px 7px 0 0"></div>
<svg style="left:468.6px;top:496.9px;color:#ef4444;" width="16.4" height="16.4" viewBox="0 0 24 24" fill="none" stroke="currentColor" stroke-width="2" stroke-linecap="round" stroke-linejoin="round"><use href="#i-clock"/></svg>
<span style="left:497.51px;top:486.70px;font-size:14.86px;font-weight:400;color:#050914;line-height:21px;letter-spacing:0.123px;-webkit-text-stroke:0.3px #050914;">Review: Cybersecurity Incident Report</span>
<span style="left:497.61px;top:505.80px;font-size:12.74px;font-weight:400;color:#ef4444;line-height:18px;letter-spacing:0.052px;-webkit-text-stroke:0.5px #ef4444;">Due 20 Feb 2026</span>
<div style="left:1744px;top:495.1px;width:50.8px;height:20.6px;background:#f1f5f9;border-radius:11px"></div>
<span style="left:1755.63px;top:497.60px;font-size:10.42px;font-weight:400;color:#1f2937;line-height:15px;letter-spacing:-0.346px;-webkit-text-stroke:0.5px #1f2937;">TODO</span>
<div style="left:461.2px;top:533.2px;width:1342px;height:12px;border-top:1px solid #e5e7eb;border-radius:7px 7px 0 0"></div>
<svg style="left:468.6px;top:553.8px;color:#6b7280;" width="16.4" height="16.4" viewBox="0 0 24 24" fill="none" stroke="currentColor" stroke-width="2" stroke-linecap="round" stroke-linejoin="round"><use href="#i-clock"/></svg>
<span style="left:497.51px;top:543.60px;font-size:14.86px;font-weight:400;color:#050914;line-height:21px;letter-spacing:0.049px;-webkit-text-stroke:0.3px #050914;">Review: Vulnerability Management Policy v1</span>
<span style="left:497.61px;top:562.70px;font-size:12.74px;font-weight:400;color:#6b7280;line-height:18px;letter-spacing:-0.048px;">Due 23 Feb 2026</span>
<div style="left:1744px;top:552px;width:50.8px;height:20.6px;background:#f1f5f9;border-radius:11px"></div>
<span style="left:1755.63px;top:554.50px;font-size:10.42px;font-weight:400;color:#1f2937;line-height:15px;letter-spacing:-0.346px;-webkit-text-stroke:0.5px #1f2937;">TODO</span>
<div style="left:461.2px;top:590.1px;width:1342px;height:12px;border-top:1px solid #e5e7eb;border-radius:7px 7px 0 0"></div>
<svg style="left:468.6px;top:610.7px;color:#6b7280;" width="16.4" height="16.4" viewBox="0 0 24 24" fill="none" stroke="currentColor" stroke-width="2" stroke-linecap="round" stroke-linejoin="round"><use href="#i-clock"/></svg>
<span style="left:497.51px;top:600.50px;font-size:14.86px;font-weight:400;color:#050914;line-height:21px;letter-spacing:0.088px;-webkit-text-stroke:0.3px #050914;">Approve: Vulnerability Management Policy v1</span>
<span style="left:497.61px;top:619.60px;font-size:12.74px;font-weight:400;color:#6b7280;line-height:18px;letter-spacing:-0.048px;">Due 23 Feb 2026</span>
<div style="left:1744px;top:608.9px;width:50.8px;height:20.6px;background:#f1f5f9;border-radius:11px"></div>
<span style="left:1755.63px;top:611.40px;font-size:10.42px;font-weight:400;color:#1f2937;line-height:15px;letter-spacing:-0.346px;-webkit-text-stroke:0.5px #1f2937;">TODO</span>
<div style="left:461.2px;top:647px;width:1342px;height:12px;border-top:1px solid #e5e7eb;border-radius:7px 7px 0 0"></div>
<svg style="left:468.6px;top:661px;color:#6b7280;" width="16.4" height="16.4" viewBox="0 0 24 24" fill="none" stroke="currentColor" stroke-width="2" stroke-linecap="round" stroke-linejoin="round"><use href="#i-clock"/></svg>
<span style="left:497.51px;top:658.60px;font-size:14.86px;font-weight:400;color:#050914;line-height:21px;letter-spacing:0.143px;-webkit-text-stroke:0.3px #050914;">Approve: Statement of Applicability v1</span>
<div style="left:1744px;top:658.2px;width:50.8px;height:20.6px;background:#f1f5f9;border-radius:11px"></div>
<span style="left:1755.63px;top:660.70px;font-size:10.42px;font-weight:400;color:#1f2937;line-height:15px;letter-spacing:-0.346px;-webkit-text-stroke:0.5px #1f2937;">TODO</span>
<svg style="left:444.1px;top:749.9px;color:#5f6673;" width="19.8" height="19.8" viewBox="0 0 24 24" fill="none" stroke="currentColor" stroke-width="2" stroke-linecap="round" stroke-linejoin="round"><use href="#i-filetext"/></svg>
<span style="left:472.09px;top:746.10px;font-size:19.11px;font-weight:400;color:#050914;line-height:27px;letter-spacing:0.145px;-webkit-text-stroke:0.55px #050914;">Forms</span>
<div style="left:444.4px;top:786.3px;width:447.4px;height:120.4px;background:#fff;border:1px solid #e5e7eb;border-radius:9px;box-shadow:0 1px 2px rgba(0,0,0,.06)"></div>
<div style="left:469.1px;top:807.2px;width:39.8px;height:39.8px;border-radius:9px;background:#fffbeb"></div>
<svg style="left:479.1px;top:817.2px;color:#d97706;" width="19.8" height="19.8" viewBox="0 0 24 24" fill="none" stroke="currentColor" stroke-width="2" stroke-linecap="round" stroke-linejoin="round"><use href="#i-triangle"/></svg>
<span style="left:521.21px;top:806.60px;font-size:14.86px;font-weight:400;color:#050914;line-height:21px;letter-spacing:0.268px;-webkit-text-stroke:0.55px #050914;">Cybersecurity Incident Report</span>
<span style="left:521.31px;top:827.80px;font-size:12.74px;font-weight:400;color:#6b7280;line-height:18px;letter-spacing:0.067px;">Report a cybersecurity incident, breach, or near-miss. This</span>
<span style="left:521.31px;top:843.90px;font-size:12.74px;font-weight:400;color:#6b7280;line-height:18px;letter-spacing:0.033px;">form creates an entry in the Incidents register and assigns ...</span>
<div style="left:521.1px;top:869px;width:48px;height:20.9px;background:#059669;border-radius:11px"></div>
<span style="left:532.27px;top:871.20px;font-size:11.58px;font-weight:700;color:#fff;line-height:16px;letter-spacing:-1.084px;">Open</span>
<svg style="left:444.1px;top:942.9px;color:#5f6673;" width="19.8" height="19.8" viewBox="0 0 24 24" fill="none" stroke="currentColor" stroke-width="2" stroke-linecap="round" stroke-linejoin="round"><use href="#i-clipboard"/></svg>
<span style="left:472.09px;top:939.30px;font-size:19.11px;font-weight:400;color:#050914;line-height:27px;letter-spacing:0.516px;-webkit-text-stroke:0.55px #050914;">Checklists</span>
<div style="left:444.4px;top:979.4px;width:447.4px;height:120.4px;background:#fff;border:1px solid #e5e7eb;border-radius:9px;box-shadow:0 1px 2px rgba(0,0,0,.06)"></div>
<div style="left:469.1px;top:1000.3px;width:39.8px;height:39.8px;border-radius:9px;background:#fffcf1"></div>
<svg style="left:479.1px;top:1010.3px;color:#e69d4e;" width="19.8" height="19.8" viewBox="0 0 24 24" fill="none" stroke="currentColor" stroke-width="2" stroke-linecap="round" stroke-linejoin="round"><use href="#i-triangle"/></svg>
<span style="left:521.21px;top:999.60px;font-size:14.86px;font-weight:400;color:#464a57;line-height:21px;letter-spacing:0.270px;-webkit-text-stroke:0.4px #464a57;">Cyber Incident Checklist</span>
<span style="left:521.31px;top:1020.90px;font-size:12.74px;font-weight:400;color:#9ca3af;line-height:18px;letter-spacing:0.149px;">Step-by-step response procedures for cybersecurity</span>
<span style="left:521.31px;top:1037.00px;font-size:12.74px;font-weight:400;color:#9ca3af;line-height:18px;letter-spacing:0.082px;">incidents.</span>
<div style="left:521.1px;top:1062.4px;width:86.6px;height:20.4px;background:#fff;border:1px solid #e5e7eb;border-radius:11px"></div>
<span style="left:532.30px;top:1064.30px;font-size:11.1px;font-weight:400;color:#3b3f4a;line-height:16px;letter-spacing:-0.242px;-webkit-text-stroke:0.45px #3b3f4a;">Coming Soon</span>
<div style="left:908.2px;top:979.4px;width:447.4px;height:91.2px;background:#fff;border:1px solid #e5e7eb;border-radius:9px;box-shadow:0 1px 2px rgba(0,0,0,.06)"></div>
<div style="left:933.1px;top:1000.3px;width:39.8px;height:39.8px;border-radius:9px;background:#ecfdf5"></div>
<svg style="left:943.1px;top:1010.3px;color:#059669;" width="19.8" height="19.8" viewBox="0 0 24 24" fill="none" stroke="currentColor" stroke-width="2" stroke-linecap="round" stroke-linejoin="round"><use href="#i-userplus"/></svg>
<span style="left:985.41px;top:999.60px;font-size:14.86px;font-weight:400;color:#050914;line-height:21px;letter-spacing:0.106px;-webkit-text-stroke:0.5px #050914;">Onboarding Request</span>
<span style="left:985.51px;top:1020.90px;font-size:12.74px;font-weight:400;color:#6b7280;line-height:18px;letter-spacing:0.068px;">Submit an onboarding request for new starters with</span>
<span style="left:985.51px;top:1037.20px;font-size:12.74px;font-weight:400;color:#6b7280;line-height:18px;letter-spacing:0.068px;">system access and checklist.</span>
<svg style="left:1315.1px;top:1002.1px;color:#4b5563;" width="15.4" height="15.4" viewBox="0 0 24 24" fill="none" stroke="currentColor" stroke-width="2" stroke-linecap="round" stroke-linejoin="round"><use href="#i-chevright"/></svg>
<div style="left:1372.4px;top:979.4px;width:447.4px;height:120.4px;background:#fff;border:1px solid #e5e7eb;border-radius:9px;box-shadow:0 1px 2px rgba(0,0,0,.06)"></div>
<div style="left:1397px;top:1000.3px;width:39.8px;height:39.8px;border-radius:9px;background:#fff5f6"></div>
<svg style="left:1407.1px;top:1010.3px;color:#e9546f;" width="19.8" height="19.8" viewBox="0 0 24 24" fill="none" stroke="currentColor" stroke-width="2" stroke-linecap="round" stroke-linejoin="round"><use href="#i-userminus"/></svg>
<span style="left:1449.41px;top:999.60px;font-size:14.86px;font-weight:400;color:#464a57;line-height:21px;letter-spacing:0.292px;-webkit-text-stroke:0.4px #464a57;">Offboarding Checklist</span>
<span style="left:1449.51px;top:1020.90px;font-size:12.74px;font-weight:400;color:#9ca3af;line-height:18px;letter-spacing:0.024px;">Verify all access is revoked and assets returned for leavers.</span>
<div style="left:1449.3px;top:1046px;width:86.2px;height:20.8px;background:#fff;border:1px solid #e5e7eb;border-radius:11px"></div>
<span style="left:1460.50px;top:1047.80px;font-size:11.1px;font-weight:400;color:#3b3f4a;line-height:16px;letter-spacing:-0.262px;-webkit-text-stroke:0.45px #3b3f4a;">Coming Soon</span>
<div style="left:0px;top:1271.6px;width:2005px;height:4.6px;background:linear-gradient(#77797d,#45464a 35%,#3a3b3f)"></div>
<div style="left:0px;top:1276.2px;width:2005px;height:16px;background:linear-gradient(90deg,#dde8f5,#e1eaf7 25%,#e1e9f8 58%,#dce1f4 78%,#dadff2)"></div>
<div style="left:22px;top:1282px;width:16px;height:16px;border-radius:50%;background:#c42b1c"></div>
<span style="left:28.32px;top:1283.10px;font-size:10.62px;font-weight:400;color:#fff;line-height:15px;">1</span>
<div style="left:16px;top:1290.6px;width:7px;height:6px;background:#f5c342;border-radius:3px 0 0 0"></div>
<span style="left:43.25px;top:1283.30px;font-size:12.06px;font-weight:400;color:#111;line-height:17px;letter-spacing:-0.879px;">25°C</span>
<div style="left:1148.9px;top:1289px;width:10.6px;height:6px;background:#1ea7ea"></div>
<div style="left:1161px;top:1289px;width:10.8px;height:6px;background:#1b93e6"></div>
<div style="left:1188px;top:1284.5px;width:213.6px;height:20px;background:#f1f4fc;border:1px solid #e6ebf6;border-radius:10px"></div>
<div style="left:1422px;top:1288.5px;width:6px;height:6px;border-radius:50%;background:#9a8df0"></div>
<div style="left:1429.8px;top:1283px;width:16px;height:16px;border-radius:50%;background:#c42b1c"></div>
<span style="left:1434.92px;top:1284.80px;font-size:10.62px;font-weight:400;color:#fff;line-height:15px;">2</span>
<svg style="left:1469px;top:1287.5px" width="13" height="6" viewBox="0 0 13 6"><path d="M0 0.5 L4 0 L13 6 L0 6Z" fill="#2a8de0"/></svg>
<div style="left:1507px;top:1288px;width:21px;height:21px;border-radius:50%;background:#22b7ad"></div>
<div style="left:1548.4px;top:1289px;width:12px;height:6px;background:#e9a920;border-radius:2px 2px 0 0"></div>
<div style="left:1560.4px;top:1290.3px;width:12px;height:6px;background:#f2d27f"></div>
<div style="left:1598px;top:1289px;width:13.5px;height:8px;border:2px solid #2bb3ea;border-radius:2px"></div>
<div style="left:1642.5px;top:1289.8px;width:12.5px;height:12px;border-radius:50%;background:#8ea8f2"></div>
<div style="left:1685px;top:1288.8px;width:16px;height:16px;border-radius:50%;background:#e8702a"></div>
<div style="left:1727px;top:1289.6px;width:8px;height:6px;background:#1a8de8"></div>
<div style="left:1733px;top:1288.6px;width:10px;height:6px;background:#1778d4;border-radius:3px 3px 0 0"></div>
<svg style="left:1771px;top:1287.5px" width="21" height="6" viewBox="0 0 21 6"><path d="M0 3.5 L19 0 Q21 0 21 2 L21 6 L0 6Z" fill="#a04de8"/></svg>
<div style="left:1813px;top:1289px;width:22px;height:8px;background:#5b606b;border-radius:2px 2px 0 0"></div>
<div style="left:1859px;top:1287.8px;width:18.6px;height:18px;border-radius:50%;background:#fdfdfe"></div>
<div style="left:1901.7px;top:1289.8px;width:21.7px;height:6px;background:#1e88d8"></div>
<div style="left:1945px;top:1289px;width:22px;height:8px;background:#5b606b;border-radius:2px 2px 0 0"></div>
<div style="left:1991px;top:1287.8px;width:20px;height:20px;border-radius:50%;background:#e23b2c"></div>
</div>
</body></html>
